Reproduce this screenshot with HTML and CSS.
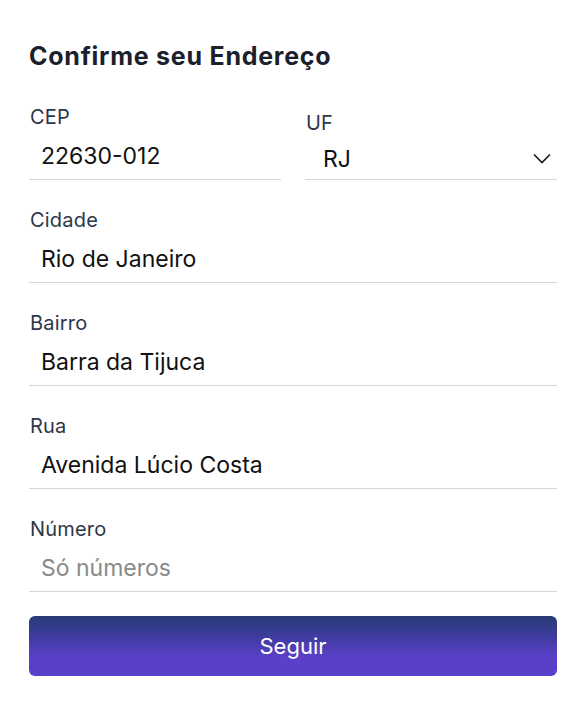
FILE: index.html
```html
<!DOCTYPE html>
<html>
<head>
    <meta charset="utf-8">
    <title>Confirme seu Endereço</title>
    <link rel="stylesheet" href="styles.css">
</head>
<body>
    <div class="container">
        <h1 class="title">Confirme seu Endereço</h1>

        <form class="address-form">
            <div class="row">
                <div class="field">
                    <label class="label" for="cep">CEP</label>
                    <input class="input" type="text" id="cep" value="22630-012">
                </div>
                <div class="field field-uf">
                    <label class="label" for="uf">UF</label>
                    <div class="select-wrap">
                        <select class="input select" id="uf">
                            <option>RJ</option>
                        </select>
                        <svg class="chevron" width="18" height="11" viewBox="0 0 18 11">
                            <path d="M1 1.5 L9 9.5 L17 1.5" fill="none" stroke="#1a1a1a" stroke-width="1.6"/>
                        </svg>
                    </div>
                </div>
            </div>

            <div class="field">
                <label class="label" for="cidade">Cidade</label>
                <input class="input" type="text" id="cidade" value="Rio de Janeiro">
            </div>

            <div class="field">
                <label class="label" for="bairro">Bairro</label>
                <input class="input" type="text" id="bairro" value="Barra da Tijuca">
            </div>

            <div class="field">
                <label class="label" for="rua">Rua</label>
                <input class="input" type="text" id="rua" value="Avenida Lúcio Costa">
            </div>

            <div class="field">
                <label class="label" for="numero">Número</label>
                <input class="input" type="text" id="numero" placeholder="Só números">
            </div>

            <button class="submit" type="submit">Seguir</button>
        </form>
    </div>
</body>
</html>
```

FILE: styles.css
```css
body {
    margin: 0;
    padding: 0;
    background-color: #fff;
    font-family: Inter, "Noto Sans", sans-serif;
}
.container {
    width: 528px;
    margin-left: 29px;
    padding-top: 40px;
}
.title {
    margin: 0 0 33px 0;
    font-size: 25px;
    line-height: 32px;
    font-weight: 700;
    letter-spacing: 0.75px;
    color: #1a202c;
}
.address-form {
    display: flex;
    flex-direction: column;
}
.row {
    display: flex;
    gap: 24px;
}
.row .field {
    flex: 1 1 0;
    min-width: 0;
}
.field {
    display: flex;
    flex-direction: column;
    margin-bottom: 28px;
}
.label {
    font-size: 20px;
    line-height: 24px;
    letter-spacing: 0.2px;
    color: #2d3748;
    margin-bottom: 3px;
    padding-left: 1px;
}
.field-uf .label {
    margin-top: 6px;
    margin-bottom: 0;
}
.input {
    height: 48px;
    box-sizing: border-box;
    padding: 0 12px;
    border: none;
    border-bottom: 1px solid #d5d5dc;
    border-radius: 0;
    background: transparent;
    font-family: Inter, "Noto Sans", sans-serif;
    font-size: 23px;
    color: #111;
    outline: none;
}
.input::placeholder {
    color: #8a8a8a;
}
.select-wrap {
    position: relative;
}
.select {
    width: 100%;
    height: 45px;
    appearance: none;
    -webkit-appearance: none;
    padding: 3px 0 0 18px;
}
.chevron {
    position: absolute;
    right: 6px;
    top: 18px;
    pointer-events: none;
}
.submit {
    margin-top: -4px;
    height: 60px;
    border: none;
    border-radius: 6px;
    background: linear-gradient(to bottom, #283a75 0%, #3f3ca0 35%, #5a40c8 68%, #5a40c8 100%);
    color: #fff;
    font-family: Inter, "Noto Sans", sans-serif;
    font-size: 22px;
    cursor: pointer;
}
```
